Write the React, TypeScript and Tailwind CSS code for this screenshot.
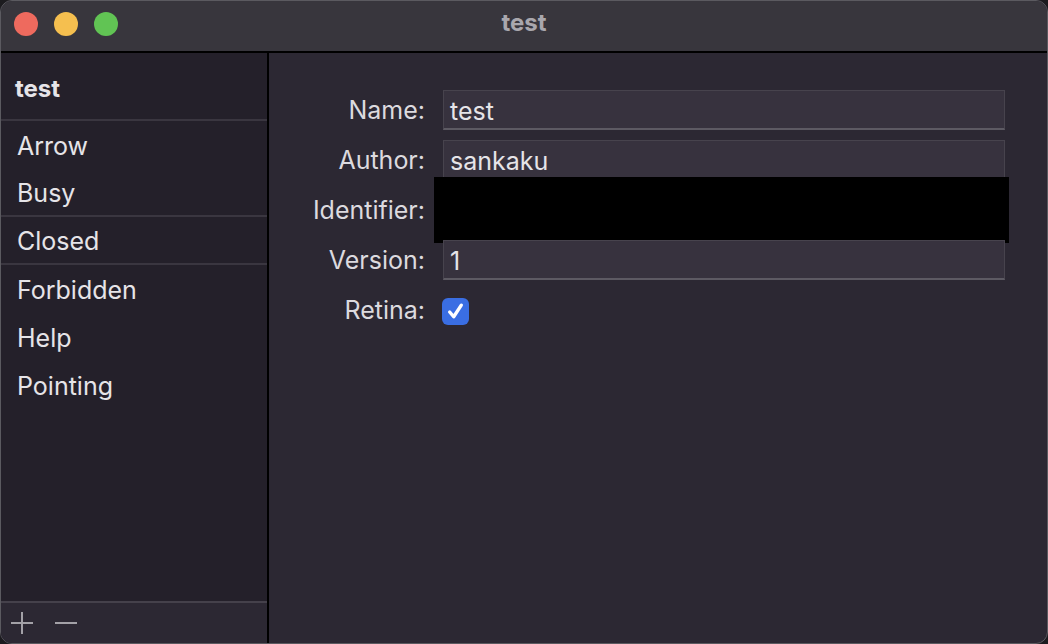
export default function App() {
  const items = [
    { name: "Arrow", sep: false },
    { name: "Busy", sep: true },
    { name: "Closed", sep: true },
    { name: "Forbidden", sep: false },
    { name: "Help", sep: false },
    { name: "Pointing", sep: false },
  ];

  const fields = [
    { label: "Name:", value: "test" },
    { label: "Author:", value: "sankaku" },
    { label: "Identifier:", value: "" },
    { label: "Version:", value: "1" },
  ];

  return (
    <div className="w-[1048px] h-[644px] bg-[#1c1b1f] font-['Inter',sans-serif]">
      <div className="w-full h-full rounded-[12px] overflow-hidden border border-[#5b5a60] flex flex-col bg-[#2c2833]">
        {/* title bar */}
        <div className="h-[52px] shrink-0 bg-[#38363d] border-b-2 border-black flex items-center relative">
          <div className="flex items-center gap-[16px] pl-[13px] pb-[4px]">
            <div className="w-[24px] h-[24px] rounded-full bg-[#ee6a5e]" />
            <div className="w-[24px] h-[24px] rounded-full bg-[#f5bf4f]" />
            <div className="w-[24px] h-[24px] rounded-full bg-[#61c454]" />
          </div>
          <div className="absolute inset-0 flex items-center justify-center pb-[6px] text-[24px] font-bold text-[#a9a7ad]">
            test
          </div>
        </div>

        <div className="flex flex-1 min-h-0">
          {/* sidebar */}
          <div className="w-[268px] shrink-0 bg-[#24202a] border-r-2 border-black flex flex-col">
            <div className="h-[68px] flex items-center pl-[14px] pt-[5px] border-b-2 border-[#3a3640] text-[24px] font-bold text-[#e6e4e8]">
              test
            </div>
            <div className="flex-1">
              {items.map((it) => (
                <div
                  key={it.name}
                  className={
                    it.sep
                      ? "h-[48px] flex items-center pl-[16px] pt-[4px] text-[25px] text-[#e6e4e8] border-b-2 border-[#3a3640]"
                      : "h-[48px] flex items-center pl-[16px] pt-[4px] text-[25px] text-[#e6e4e8]"
                  }
                >
                  {it.name}
                </div>
              ))}
            </div>
            <div className="h-[42px] shrink-0 bg-[#2c2833] border-t-2 border-[#45414b] flex items-center gap-[20px] pl-[9px] text-[#a3a1a7]">
              <svg width="24" height="24" viewBox="0 0 24 24" fill="none" stroke="currentColor" strokeWidth="2">
                <path d="M12 1v22M1 12h22" />
              </svg>
              <svg width="24" height="24" viewBox="0 0 24 24" fill="none" stroke="currentColor" strokeWidth="2">
                <path d="M1 12h22" />
              </svg>
            </div>
          </div>

          {/* content */}
          <div className="flex-1 pt-[37px]">
            <div className="flex flex-col gap-[10px]">
              {fields.map((f) => (
                <div key={f.label} className="flex items-center h-[40px]">
                  <div className="w-[156px] text-right text-[25px] text-[#dcdadf] pt-[1px]">{f.label}</div>
                  <div className="ml-[18px] w-[562px] h-[40px] bg-[#37323e] border border-[#47434d] border-b-2 border-b-[#5d5a63] flex items-end pl-[6px] text-[25px] leading-[34px] text-[#e6e4e8] relative">
                    {f.value}
                    {f.label === "Identifier:" && (
                      <div className="absolute left-[-10px] top-[-14px] w-[575px] h-[66px] bg-black" />
                    )}
                  </div>
                </div>
              ))}
              <div className="flex items-center h-[40px]">
                <div className="w-[156px] text-right text-[25px] text-[#dcdadf] pt-[1px]">Retina:</div>
                <div className="ml-[17px] mt-[2px] w-[27px] h-[27px] rounded-[6px] bg-[#3a6ee3] flex items-center justify-center">
                  <svg width="19" height="19" viewBox="0 0 18 18" fill="none" stroke="white" strokeWidth="3.2" strokeLinecap="round" strokeLinejoin="round">
                    <path d="M3.5 9.5l3.8 4.5L14.5 3" />
                  </svg>
                </div>
              </div>
            </div>
          </div>
        </div>
      </div>
    </div>
  );
}
